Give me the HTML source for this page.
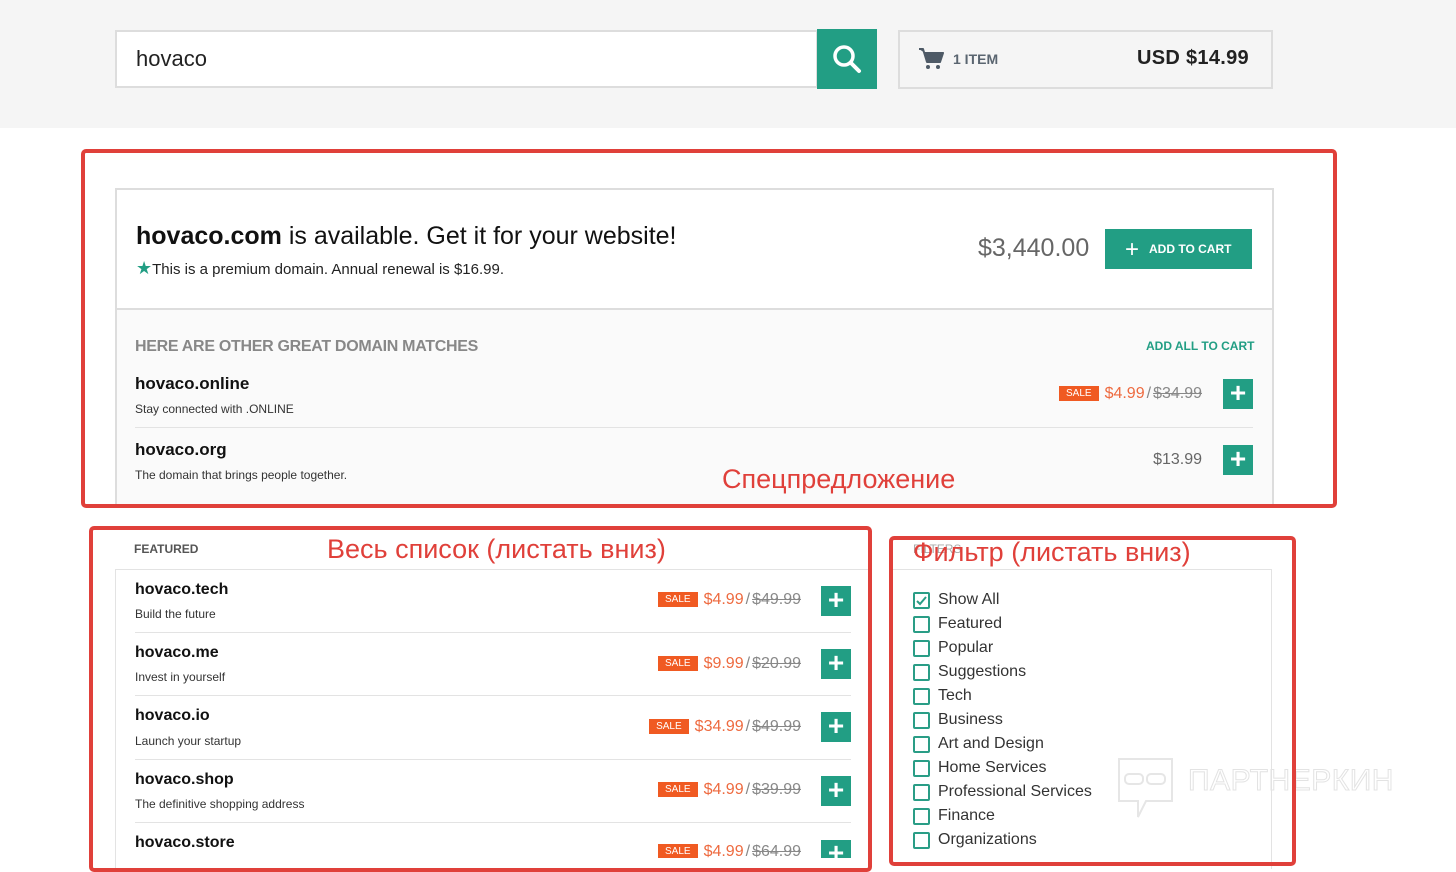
<!DOCTYPE html>
<html><head><meta charset="utf-8"><style>
*{box-sizing:border-box;margin:0;padding:0}
body{width:1456px;height:872px;overflow:hidden;background:#fff;font-family:"Liberation Sans",sans-serif;position:relative;color:#111}
.a{position:absolute}
.teal{background:#229e84}
.plus{position:absolute;width:30px;height:30px;background:#229e84;color:#fff;font-size:28px;line-height:28px;text-align:center;font-weight:bold}
.sale{display:inline-block;background:#f05a22;color:#fff;font-size:10px;padding:2px 7px;vertical-align:2px;margin-right:6px}
.pr{position:absolute;font-size:16px;color:#ee6a3f;text-align:right;white-space:nowrap}
.pr s{color:#888}
.pr .sl{color:#888;margin:0 2px}
.dn{position:absolute;font-size:16px;font-weight:bold;color:#111}
.ds{position:absolute;font-size:12px;color:#333}
.hl{position:absolute;height:1px;background:#e3e3e3}
.red{position:absolute;border:4px solid #e0403a;border-radius:5px}
.cb{position:absolute;left:913px;width:17px;height:17px;border:2px solid #2a9d86;border-radius:2px}
.cl{position:absolute;left:938px;font-size:16px;color:#333}
.rt{position:absolute;color:#e0403a;font-size:27px;font-family:"Liberation Sans","DejaVu Sans",sans-serif;white-space:nowrap}
</style></head><body>
<div class="a" style="left:0;top:0;width:1456px;height:128px;background:#f5f5f5"></div>
<div class="a" style="left:115px;top:30px;width:703px;height:58px;background:#fff;border:2px solid #ddd"></div>
<div class="a" style="left:136px;top:46px;font-size:22px;color:#222">hovaco</div>
<div class="a teal" style="left:817px;top:29px;width:60px;height:60px"></div>
<svg class="a" style="left:831px;top:43px" width="32" height="32" viewBox="0 0 32 32"><circle cx="13" cy="13" r="9" fill="none" stroke="#fff" stroke-width="3.5"/><path d="M20 20l8 8" stroke="#fff" stroke-width="4" stroke-linecap="round"/></svg>
<div class="a" style="left:898px;top:30px;width:375px;height:59px;border:2px solid #ddd;background:#f5f5f5"></div>
<svg class="a" style="left:918px;top:47px" width="26" height="24" viewBox="0 0 26 24"><path d="M1 2h4l4 13h13l3-9H7" fill="#4e5a66" stroke="#4e5a66" stroke-width="2" stroke-linejoin="round"/><circle cx="10" cy="20" r="2" fill="#4e5a66"/><circle cx="20" cy="20" r="2" fill="#4e5a66"/></svg>
<div class="a" style="left:953px;top:51px;font-size:14px;font-weight:bold;color:#5a6570">1 ITEM</div>
<div class="a" style="left:1137px;top:47px;font-size:20px;font-weight:bold;color:#222;letter-spacing:0.3px">USD $14.99</div>

<!-- main card -->
<div class="a" style="left:115px;top:188px;width:1159px;height:317px;border:2px solid #ddd;border-bottom:none;background:#fafafa"></div>
<div class="a" style="left:117px;top:190px;width:1155px;height:120px;background:#fff;border-bottom:2px solid #ddd"></div>
<div class="a" style="left:136px;top:222px;font-size:25px;color:#111"><b>hovaco.com</b> is available. Get it for your website!</div>
<div class="a" style="left:136px;top:258px;font-size:15px;color:#222"><span style="color:#229e84;font-size:18px">★</span>This is a premium domain. Annual renewal is $16.99.</div>
<div class="a" style="left:978px;top:234px;font-size:25px;color:#666">$3,440.00</div>
<div class="a teal" style="left:1105px;top:229px;width:147px;height:40px;color:#fff;font-size:12px;font-weight:bold;line-height:40px;padding-left:20px"><span style="font-size:24px;vertical-align:-4px;font-weight:normal;margin-right:10px">+</span>ADD TO CART</div>
<div class="a" style="left:135px;top:338px;font-size:16px;color:#888;font-weight:bold;letter-spacing:-0.3px">HERE ARE OTHER GREAT DOMAIN MATCHES</div>
<div class="a" style="left:1146px;top:339px;font-size:12px;color:#229e84;font-weight:bold">ADD ALL TO CART</div>
<div class="dn" style="left:135px;top:374px;font-size:17px">hovaco.online</div>
<div class="ds" style="left:135px;top:402px">Stay connected with .ONLINE</div>
<div class="pr" style="right:254px;top:385px"><span class="sale">SALE</span>$4.99<span class="sl">/</span><s>$34.99</s></div>
<div class="plus" style="left:1223px;top:379px">+</div>
<div class="hl" style="left:135px;top:427px;width:1118px"></div>
<div class="dn" style="left:135px;top:440px;font-size:17px">hovaco.org</div>
<div class="ds" style="left:135px;top:468px">The domain that brings people together.</div>
<div class="pr" style="right:254px;top:451px;color:#666">$13.99</div>
<div class="plus" style="left:1223px;top:445px">+</div>
<div class="rt" style="left:722px;top:464px">Спецпредложение</div>
<div class="red" style="left:81px;top:149px;width:1256px;height:359px"></div>

<!-- featured -->
<div class="a" style="left:134px;top:542px;font-size:12px;font-weight:bold;color:#555">FEATURED</div>
<div class="a" style="left:115px;top:569px;width:756px;height:300px;border-left:1px solid #e3e3e3;border-top:1px solid #e3e3e3"></div>
<div class="rt" style="left:327px;top:534px">Весь список (листать вниз)</div>
<div class="dn" style="left:135px;top:581px">hovaco.tech</div><div class="ds" style="left:135px;top:607px">Build the future</div>
<div class="pr" style="right:655px;top:591px"><span class="sale">SALE</span>$4.99<span class="sl">/</span><s>$49.99</s></div><div class="plus" style="left:821px;top:586px">+</div>
<div class="hl" style="left:135px;top:632px;width:716px"></div>
<div class="dn" style="left:135px;top:644px">hovaco.me</div><div class="ds" style="left:135px;top:670px">Invest in yourself</div>
<div class="pr" style="right:655px;top:655px"><span class="sale">SALE</span>$9.99<span class="sl">/</span><s>$20.99</s></div><div class="plus" style="left:821px;top:649px">+</div>
<div class="hl" style="left:135px;top:695px;width:716px"></div>
<div class="dn" style="left:135px;top:707px">hovaco.io</div><div class="ds" style="left:135px;top:734px">Launch your startup</div>
<div class="pr" style="right:655px;top:718px"><span class="sale">SALE</span>$34.99<span class="sl">/</span><s>$49.99</s></div><div class="plus" style="left:821px;top:712px">+</div>
<div class="hl" style="left:135px;top:759px;width:716px"></div>
<div class="dn" style="left:135px;top:771px">hovaco.shop</div><div class="ds" style="left:135px;top:797px">The definitive shopping address</div>
<div class="pr" style="right:655px;top:781px"><span class="sale">SALE</span>$4.99<span class="sl">/</span><s>$39.99</s></div><div class="plus" style="left:821px;top:776px">+</div>
<div class="hl" style="left:135px;top:822px;width:716px"></div>
<div class="dn" style="left:135px;top:834px">hovaco.store</div>
<div class="a" style="left:89px;top:840px;width:782px;height:18px;overflow:hidden"><div class="pr" style="right:70px;top:3px"><span class="sale">SALE</span>$4.99<span class="sl">/</span><s>$64.99</s></div><div class="plus" style="left:732px;top:-1px">+</div></div>
<div class="red" style="left:89px;top:526px;width:783px;height:346px"></div>

<!-- filters -->
<div class="a" style="left:913px;top:542px;font-size:12px;color:#aaa">FILTERS</div>
<div class="a" style="left:890px;top:569px;width:382px;height:300px;border-right:1px solid #e3e3e3;border-top:1px solid #e3e3e3"></div>
<div class="rt" style="left:913px;top:537px">Фильтр (листать вниз)</div>
<div class="cb" style="top:592px"><svg width="13" height="13" viewBox="0 0 13 13" style="position:absolute;left:0;top:0"><path d="M2 7l3 3 6-7" fill="none" stroke="#2a9d86" stroke-width="2"/></svg></div><div class="cl" style="top:591px">Show All</div>
<div class="cb" style="top:616px"></div><div class="cl" style="top:615px">Featured</div>
<div class="cb" style="top:640px"></div><div class="cl" style="top:639px">Popular</div>
<div class="cb" style="top:664px"></div><div class="cl" style="top:663px">Suggestions</div>
<div class="cb" style="top:688px"></div><div class="cl" style="top:687px">Tech</div>
<div class="cb" style="top:712px"></div><div class="cl" style="top:711px">Business</div>
<div class="cb" style="top:736px"></div><div class="cl" style="top:735px">Art and Design</div>
<div class="cb" style="top:760px"></div><div class="cl" style="top:759px">Home Services</div>
<div class="cb" style="top:784px"></div><div class="cl" style="top:783px">Professional Services</div>
<div class="cb" style="top:808px"></div><div class="cl" style="top:807px">Finance</div>
<div class="cb" style="top:832px"></div><div class="cl" style="top:831px">Organizations</div>
<svg class="a" style="left:1116px;top:757px" width="60" height="64" viewBox="0 0 60 64"><path d="M3 2h53v42H30l-8 16v-16H3z" fill="none" stroke="#e6e6e6" stroke-width="2"/><rect x="9" y="17" width="18" height="10" rx="4" fill="none" stroke="#e6e6e6" stroke-width="2"/><rect x="31" y="17" width="18" height="10" rx="4" fill="none" stroke="#e6e6e6" stroke-width="2"/></svg>
<div class="a" style="left:1188px;top:764px;font-size:30px;color:transparent;-webkit-text-stroke:1px #e3e3e3;letter-spacing:0.5px">ПАРТНЕРКИН</div>
<div class="red" style="left:889px;top:536px;width:407px;height:330px"></div>
</body></html>
